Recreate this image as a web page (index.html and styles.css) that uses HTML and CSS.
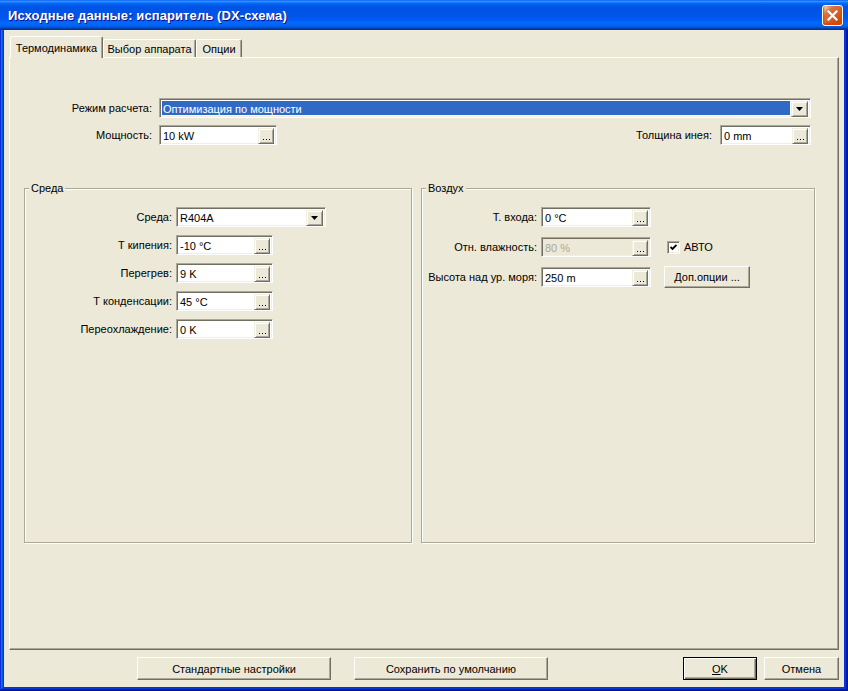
FILE: index.html
```html
<!DOCTYPE html>
<html lang="ru">
<head>
<meta charset="utf-8">
<title>Исходные данные: испаритель (DX-схема)</title>
<link rel="stylesheet" href="styles.css">
</head>
<body>
<div class="window">
  <div class="titlebar">
    <span class="title">Исходные данные: испаритель (DX-схема)</span>
    <button class="close" aria-label="Закрыть">
      <svg width="11" height="11" viewBox="0 0 11 11"><path d="M1.5 1.5 L9.5 9.5 M9.5 1.5 L1.5 9.5" stroke="#fff" stroke-width="2.2" stroke-linecap="square" fill="none"/></svg>
    </button>
  </div>

  <div class="client">
    <div class="tabstrip">
      <div class="tab active w-thermo">Термодинамика</div>
      <div class="tab w-unit">Выбор аппарата</div>
      <div class="tab w-opts">Опции</div>
    </div>

    <div class="panel">
      <div class="top">
        <div class="row">
          <span class="lbl lbl-top">Режим расчета:</span>
          <div class="edit combo selected w-mode"><span class="val">Оптимизация по мощности</span><span class="drop"><svg width="7" height="4" viewBox="0 0 7 4"><path d="M0 0H7L3.5 4Z"/></svg></span></div>
        </div>
        <div class="row row-split">
          <div class="pair">
            <span class="lbl lbl-top">Мощность:</span>
            <div class="edit w-power"><span class="val">10 kW</span><span class="dots"><i></i></span></div>
          </div>
          <div class="pair">
            <span class="lbl lbl-frost">Толщина инея:</span>
            <div class="edit w-frost"><span class="val">0 mm</span><span class="dots"><i></i></span></div>
          </div>
        </div>
      </div>

      <div class="groups">
        <fieldset class="group g-medium">
          <legend>Среда</legend>
          <div class="grows">
            <div class="grow"><span class="lbl">Среда:</span><div class="edit combo w-refr"><span class="val">R404A</span><span class="drop"><svg width="7" height="4" viewBox="0 0 7 4"><path d="M0 0H7L3.5 4Z"/></svg></span></div></div>
            <div class="grow"><span class="lbl">Т кипения:</span><div class="edit w-med"><span class="val">-10 °C</span><span class="dots"><i></i></span></div></div>
            <div class="grow"><span class="lbl">Перегрев:</span><div class="edit w-med"><span class="val">9 K</span><span class="dots"><i></i></span></div></div>
            <div class="grow"><span class="lbl">Т конденсации:</span><div class="edit w-med"><span class="val">45 °C</span><span class="dots"><i></i></span></div></div>
            <div class="grow"><span class="lbl">Переохлаждение:</span><div class="edit w-med"><span class="val">0 K</span><span class="dots"><i></i></span></div></div>
          </div>
        </fieldset>

        <fieldset class="group g-air">
          <legend>Воздух</legend>
          <div class="grows">
            <div class="grow"><span class="lbl">Т. входа:</span><div class="edit w-air"><span class="val">0 °C</span><span class="dots"><i></i></span></div></div>
            <div class="grow">
              <span class="lbl">Отн. влажность:</span>
              <div class="edit w-air disabled"><span class="val">80 %</span><span class="dots"><i></i></span></div>
              <span class="check"><svg width="7" height="7" viewBox="0 0 7 7"><path d="M0.5 3 L2.5 5 L6.5 1" stroke="#000" stroke-width="1.8" fill="none"/></svg></span>
              <span class="check-label">АВТО</span>
            </div>
            <div class="grow">
              <span class="lbl">Высота над ур. моря:</span>
              <div class="edit w-air"><span class="val">250 m</span><span class="dots"><i></i></span></div>
              <button class="btn btn-more">Доп.опции ...</button>
            </div>
          </div>
        </fieldset>
      </div>
    </div>

    <div class="buttons">
      <button class="btn btn-wide">Стандартные настройки</button>
      <button class="btn btn-wide btn-save">Сохранить по умолчанию</button>
      <button class="btn btn-ok default"><u>O</u>K</button>
      <button class="btn btn-cancel">Отмена</button>
    </div>
  </div>
</div>
</body>
</html>
```

FILE: styles.css
```css
* { box-sizing: border-box; }

html, body {
  margin: 0;
  padding: 0;
}

body {
  width: 848px;
  height: 691px;
  overflow: hidden;
  font: 11px "Liberation Sans", Arial, sans-serif;
  color: #000;
  background: #0831d9;
}

/* window frame */
.window {
  width: 848px;
  height: 691px;
  display: flex;
  flex-direction: column;
  background: #0831d9;
  box-shadow: inset -1px -1px #00138c, inset 1px 1px #0831d9,
              inset -2px -2px #001ea0, inset 2px 2px #166aee,
              inset -3px -3px #003bda, inset 3px 3px #0855dd;
}

.titlebar {
  flex: none;
  height: 30px;
  display: flex;
  align-items: center;
  padding: 0 5px 0 8px;
  background: linear-gradient(180deg, #0058ee 0%, #3a93ff 4%, #288eff 6%, #127dff 8%,
              #036ffc 10%, #0262ee 14%, #0057e5 20%, #0054e3 24%, #0055eb 56%,
              #005bf5 66%, #026afe 76%, #0062ef 86%, #0052d6 92%, #0040ab 94%, #003092 100%);
}

.title {
  flex: 1;
  color: #fff;
  font: bold 13px "Liberation Sans", Arial, sans-serif;
  letter-spacing: 0.1px;
  text-shadow: 1px 1px #0f1089;
  padding-top: 1px;
}

.close {
  width: 21px;
  height: 21px;
  padding: 0;
  display: flex;
  align-items: center;
  justify-content: center;
  border: 1px solid #fff;
  border-radius: 3px;
  background: radial-gradient(circle at 90% 90%, #cc4600 0%, #dc6527 55%, #cd7546 70%, #ffccb2 90%, #fff 100%);
  box-shadow: inset 0 -1px 2px 1px #da4600;
}

/* client area */
.client {
  flex: 1;
  margin: 0 4px 4px;
  padding: 6px 5px 7px;
  background: #ece9d8;
  display: flex;
  flex-direction: column;
}

/* tabs */
.tabstrip {
  flex: none;
  height: 21px;
  display: flex;
  align-items: flex-end;
  padding-left: 1px;
  position: relative;
  z-index: 1;
}

.tab {
  height: 18px;
  display: flex;
  align-items: center;
  justify-content: center;
  background: #ece9d8;
  border: 1px solid;
  border-bottom: 0;
  border-color: #fff #716f64 transparent #fff;
  box-shadow: inset -1px 0 #aca899;
  border-radius: 2px 2px 0 0;
  padding-top: 1px;
}

.tab.active {
  height: 22px;
  margin-bottom: -1px;
  padding-top: 0;
}

.w-thermo { width: 93px; }
.w-unit { width: 93px; }
.w-opts { width: 46px; }

.panel {
  flex: 1;
  border: 1px solid;
  border-color: #fff #716f64 #716f64 #fff;
  box-shadow: inset -1px -1px #aca899;
  padding-top: 40px;
}

/* top rows */
.row {
  display: flex;
  align-items: center;
  height: 20px;
}

.row-split {
  margin-top: 7px;
  justify-content: space-between;
  padding-right: 27px;
}

.pair {
  display: flex;
  align-items: center;
}

.lbl {
  white-space: nowrap;
  text-align: right;
}

.lbl-top {
  width: 142px;
  margin-right: 7px;
}

.lbl-frost {
  margin-right: 8px;
}

/* edit boxes */
.edit {
  display: flex;
  height: 20px;
  padding: 2px;
  background: #fff;
  border: 1px solid;
  border-color: #aca899 #fff #fff #aca899;
  box-shadow: inset 1px 1px #716f64, inset -1px -1px #f1efe2;
}

.edit .val {
  flex: 1;
  min-width: 0;
  line-height: 16px;
  padding-left: 1px;
  white-space: nowrap;
  overflow: hidden;
}

.edit.disabled {
  background: #ece9d8;
}

.edit.disabled .val {
  color: #aca899;
}

.combo.selected .val {
  background: #316ac5;
  color: #fff;
  margin-right: 1px;
}

.dots,
.drop {
  flex: none;
  height: 16px;
  background: #ece9d8;
  border: 1px solid;
  border-color: #f1efe2 #716f64 #716f64 #f1efe2;
  box-shadow: inset 1px 1px #fff, inset -1px -1px #aca899;
  display: flex;
  justify-content: center;
}

.dots {
  width: 16px;
  align-items: flex-end;
  padding-bottom: 3px;
}

.dots i {
  display: block;
  width: 7px;
  height: 1px;
  margin-left: 1px;
  background: repeating-linear-gradient(90deg, #000 0 1px, transparent 1px 3px);
}

.drop {
  width: 17px;
  align-items: center;
}

.drop svg {
  display: block;
  fill: #000;
}

.w-mode { width: 652px; }
.w-power { width: 118px; }
.w-frost { width: 91px; }
.w-refr { width: 150px; }
.w-med { width: 97px; }
.w-air { width: 110px; }

/* group boxes */
.groups {
  margin-top: 37px;
  padding-left: 14px;
  display: grid;
  grid-template-columns: 388px 394px;
  column-gap: 9px;
}

.group {
  margin: 0;
  padding: 0;
  min-width: 0;
  height: 361px;
  border: 1px solid #aca899;
  box-shadow: inset 1px 1px #fff, 1px 1px #fff;
}

.group legend {
  margin-left: 4px;
  padding: 0 2px;
  height: 13px;
  line-height: 13px;
  background: #ece9d8;
}

.grows {
  display: flex;
  flex-direction: column;
  gap: 8px;
  padding-top: 12px;
}

.g-air .grows {
  gap: 10px;
}

.grow {
  display: flex;
  align-items: center;
  height: 20px;
}

.g-medium .lbl {
  width: 147px;
  margin-right: 4px;
}

.g-air .lbl {
  width: 115px;
  margin-right: 4px;
}

/* checkbox */
.check {
  width: 13px;
  height: 13px;
  margin-left: 16px;
  display: flex;
  align-items: center;
  justify-content: center;
  background: #fff;
  border: 1px solid;
  border-color: #aca899 #fff #fff #aca899;
  box-shadow: inset 1px 1px #716f64, inset -1px -1px #f1efe2;
}

.check svg {
  display: block;
}

.check-label {
  margin-left: 4px;
}

/* push buttons */
.btn {
  font: inherit;
  color: #000;
  padding: 0;
  height: 23px;
  background: #ece9d8;
  border: 1px solid;
  border-color: #fff #716f64 #716f64 #fff;
  box-shadow: inset -1px -1px #aca899;
}

.btn.default {
  border-color: #000;
  box-shadow: inset 1px 1px #fff, inset -1px -1px #716f64, inset -2px -2px #aca899;
}

.btn-more {
  width: 86px;
  height: 22px;
  margin-left: 13px;
}

.buttons {
  flex: none;
  margin-top: 7px;
  display: flex;
  padding-left: 128px;
}

.btn-wide { width: 194px; }
.btn-save { margin-left: 23px; }
.btn-ok { width: 74px; margin-left: auto; }
.btn-cancel { width: 75px; margin-left: 7px; }
```
